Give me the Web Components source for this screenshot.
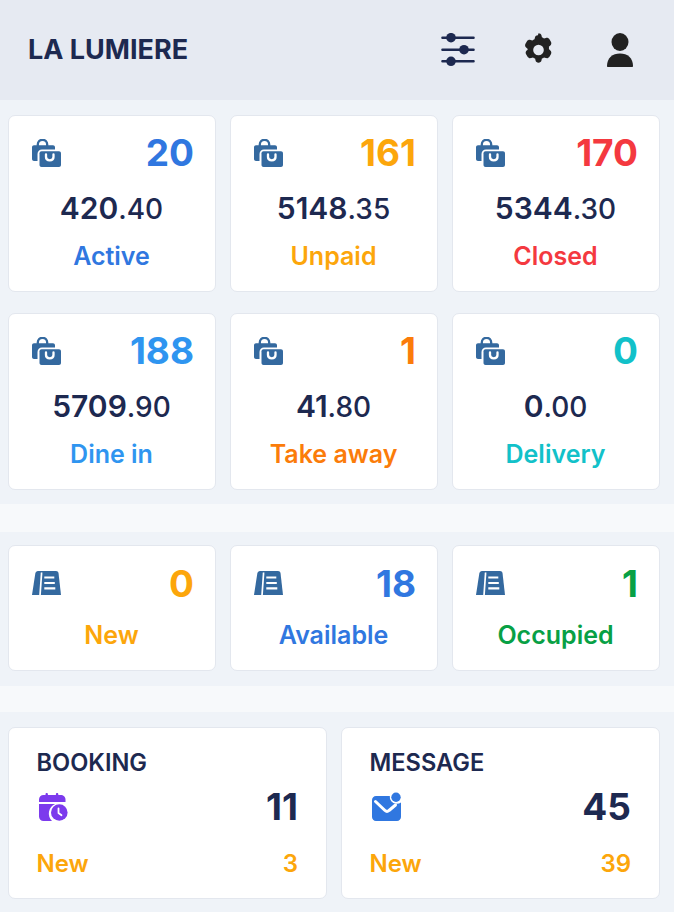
<!DOCTYPE html>
<html>
<head>
<meta charset="utf-8">
<title>La Lumiere</title>
<style>
   html, body { margin: 0; padding: 0; }
   body {
      width: 674px;
      height: 912px;
      overflow: hidden;
      background: #eff3f8;
      font-family: Inter, "Liberation Sans", sans-serif;
      color: #1d2950;
   }
</style>
</head>
<body>

<template id="dash-header-tpl">
   <style>
      :host {
         display: flex;
         align-items: center;
         height: 100px;
         box-sizing: border-box;
         padding: 0 41px 0 28px;
         background: #e6eaf2;
      }
      h1 {
         flex: 1;
         margin: 0 0 2px;
         font-size: 27px;
         font-weight: 700;
         color: #1d2950;
      }
      nav {
         display: flex;
         align-items: center;
      }
      svg { display: block; }
      .gear { margin-left: 48px; }
      .user { margin-left: 53px; }
   </style>
   <h1><slot></slot></h1>
   <nav>
      <svg width="34" height="34" viewBox="0 0 34 34">
         <path stroke="#1d2950" stroke-width="2.600" stroke-linecap="round" d="M1.500 4.700h31M1.500 16.700h31M1.500 28.300h31"/>
         <g fill="#1d2950">
            <circle cx="10" cy="4.700" r="4.800"/>
            <circle cx="23" cy="16.700" r="4.800"/>
            <circle cx="10" cy="28.300" r="4.800"/>
         </g>
      </svg>
      <svg class="gear" width="31" height="34" viewBox="3 0.500 18 23">
         <path fill="#222" fill-rule="evenodd" d="M12 .6c1 0 1.800.6 2 1.500l.3 1.300c.5.2 1 .4 1.400.8l1.300-.4c.9-.3 1.900.1 2.400.9l1 1.700c.5.900.3 1.900-.4 2.500l-1 .9c.1.300.1.500.1.800s0 .500-.1.800l1 .9c.7.600.9 1.600.4 2.500l-1 1.700c-.5.800-1.500 1.200-2.400.9l-1.300-.4c-.4.300-.9.600-1.400.8l-.3 1.300c-.2.900-1 1.500-2 1.500s-1.800-.6-2-1.500l-.3-1.300c-.5-.2-1-.5-1.400-.8l-1.300.4c-.9.3-1.900-.1-2.400-.9l-1-1.700c-.5-.9-.3-1.900.4-2.500l1-.9C4.500 12.500 4.500 12.300 4.500 12s0-.500.100-.8l-1-.9c-.7-.6-.9-1.600-.4-2.500l1-1.700c.5-.8 1.500-1.200 2.400-.9l1.300.4c.4-.4.9-.6 1.400-.8l.3-1.300c.2-.9 1-1.500 2-1.500zM12 8.400a3.600 3.600 0 1 0 0 7.200 3.600 3.600 0 0 0 0-7.200z"/>
      </svg>
      <svg class="user" width="26" height="34" viewBox="0 0 26 34">
         <ellipse cx="13" cy="9" rx="8.500" ry="9" fill="#222"/>
         <path fill="#222" d="M1 34c-.6 0-1-.4-1-1C0 25 5.500 20.500 13 20.500S26 25 26 33c0 .6-.4 1-1 1z"/>
      </svg>
   </nav>
</template>

<template id="card-grid-tpl">
   <style>
      :host {
         display: grid;
         grid-template-columns: repeat(var(--cols, 3), 1fr);
         column-gap: 14px;
         row-gap: 21px;
         padding: var(--top, 15px) 14px var(--bottom, 14px) 8px;
      }
   </style>
   <slot></slot>
</template>

<template id="gap-band-tpl">
   <style>
      :host { display: block; height: var(--h, 28px); background: #f7f9fb; }
   </style>
</template>

<template id="order-card-tpl">
   <style>
      :host {
         display: block;
         height: 177px;
         box-sizing: border-box;
         padding: 19px 21px 0 23px;
         background: #fff;
         border: 1.500px solid #e3e7ee;
         border-radius: 7px;
         color: var(--c);
      }
      .top {
         display: flex;
         justify-content: space-between;
         align-items: center;
         height: 36px;
      }
      .count { font-size: 37px; font-weight: 700; line-height: 36px; }
      svg { display: block; }
      .amount {
         margin: 18px -8px 0 -11px;
         text-align: center;
         font-size: 30px;
         line-height: 38px;
         font-weight: 600;
         color: #1d2950;
      }
      .amount small { font-size: 28px; font-weight: 500; }
      .label {
         margin: 12px -8px 0 -11px;
         text-align: center;
         font-size: 25px;
         line-height: 32px;
         font-weight: 600;
      }
   </style>
   <div class="top">
      <svg width="29" height="28" viewBox="0 0 29 28">
         <path fill="none" stroke="#34699f" stroke-width="2.300" d="M5.800 7V5.500a4.700 4.700 0 0 1 9.400 0V7"/>
         <path fill="#34699f" d="M2 6.300h19c1.100 0 2 .9 2 2v2.200H10C7.500 10.500 5.500 12.500 5.500 15v7H2c-1.100 0-2-.9-2-2V8.300c0-1.100.9-2 2-2z"/>
         <path fill="#34699f" d="M9.500 12.300H27c1.100 0 2 .9 2 2V26c0 1.100-.9 2-2 2H9.500c-1.100 0-2-.9-2-2V14.300c0-1.100.9-2 2-2z"/>
         <path fill="none" stroke="#fff" stroke-width="2.300" stroke-linecap="round" d="M14 15.500v2.500c0 2 1.700 3.300 3.800 3.300s3.700-1.300 3.700-3.300v-2.500"/>
      </svg>
      <span class="count"></span>
   </div>
   <div class="amount"><span class="whole"></span><small class="cents"></small></div>
   <div class="label"><slot></slot></div>
</template>

<template id="table-card-tpl">
   <style>
      :host {
         display: block;
         height: 126px;
         box-sizing: border-box;
         padding: 20px 21px 0 23px;
         background: #fff;
         border: 1.500px solid #e3e7ee;
         border-radius: 7px;
         color: var(--c);
      }
      .top {
         display: flex;
         justify-content: space-between;
         align-items: center;
         height: 36px;
      }
      .count { font-size: 37px; font-weight: 700; line-height: 36px; }
      svg { display: block; margin-top: -2px; }
      .label {
         margin: 17px -8px 0 -11px;
         text-align: center;
         font-size: 25px;
         line-height: 32px;
         font-weight: 600;
      }
   </style>
   <div class="top">
      <svg width="29" height="24" viewBox="0 0 29 24">
         <path fill="#34699f" d="M6 0H24c1.300 0 2.300.8 2.500 2L29 24H0L3.300 2.500C3.600 1 4.600 0 6 0z"/>
         <path fill="none" stroke="#fff" stroke-width="1.700" d="M9.400 1.500C9.700 2.500 9.500 3.500 9.400 4.500L8 24.500"/>
         <path fill="none" stroke="#fff" stroke-width="2.200" d="M12.300 6.500h10M12.300 12h10.500M12.300 17.300h11"/>
      </svg>
      <span class="count"></span>
   </div>
   <div class="label"><slot></slot></div>
</template>

<template id="info-card-tpl">
   <style>
      :host {
         display: block;
         height: 172px;
         box-sizing: border-box;
         padding: 19px 28px 0 27.500px;
         background: #fff;
         border: 1.500px solid #e3e7ee;
         border-radius: 7px;
         color: #1d2950;
      }
      h2 {
         margin: 0;
         font-size: 23.600px;
         line-height: 32px;
         font-weight: 600;
      }
      .mid {
         display: flex;
         justify-content: space-between;
         align-items: center;
         height: 44px;
         margin-top: 5px;
      }
      .mid span { font-size: 37px; font-weight: 700; }
      .new {
         display: flex;
         justify-content: space-between;
         margin-top: 20px;
         font-size: 24px;
         line-height: 32px;
         font-weight: 600;
         color: #fca60b;
      }
      ::slotted(svg) { display: block; margin: 1px 0 0 2px; }
   </style>
   <h2 class="title"></h2>
   <div class="mid"><slot></slot><span class="total"></span></div>
   <div class="new"><span>New</span><span class="fresh"></span></div>
</template>

<dash-header>LA LUMIERE</dash-header>

<card-grid>
   <order-card color="#3077e0" count="20" whole="420" cents=".40">Active</order-card>
   <order-card color="#fca60b" count="161" whole="5148" cents=".35">Unpaid</order-card>
   <order-card color="#f4393f" count="170" whole="5344" cents=".30">Closed</order-card>
   <order-card color="#2f95f0" count="188" whole="5709" cents=".90">Dine in</order-card>
   <order-card color="#fb7c0a" count="1" whole="41" cents=".80">Take away</order-card>
   <order-card color="#12c1c9" count="0" whole="0" cents=".00">Delivery</order-card>
</card-grid>
<gap-band></gap-band>
<card-grid style="--top:13px;--bottom:15px">
   <table-card color="#fca60b" count="0">New</table-card>
   <table-card color="#3077e0" count="18">Available</table-card>
   <table-card color="#08a045" count="1">Occupied</table-card>
</card-grid>
<gap-band style="--h:26px"></gap-band>
<card-grid style="--cols:2">
   <info-card title-text="BOOKING" total="11" fresh="3">
      <svg width="29" height="28" viewBox="0 0 29 28">
         <path fill="#7c3aed" d="M7.700 0c.7 0 1.200.5 1.200 1.200V2h8V1.200c0-.7.5-1.200 1.200-1.200s1.200.5 1.200 1.200V2h2.200C24.500 2 26.500 4 26.500 6.500V9H0V6.500C0 4 2 2 4.500 2h2V1.200C6.500.5 7 0 7.700 0z"/>
         <path fill="#7c3aed" d="M0 11h16.200A10.300 10.300 0 0 0 13 28H4.500C2 28 0 26 0 23.500z"/>
         <circle cx="20.300" cy="19.500" r="8.300" fill="#7c3aed"/>
         <path fill="none" stroke="#fff" stroke-width="1.800" stroke-linecap="round" stroke-linejoin="round" d="M19.500 15.500v4.500l3 2.300"/>
      </svg>
   </info-card>
   <info-card title-text="MESSAGE" total="45" fresh="39">
      <svg width="30" height="30" viewBox="0 0 30 30">
         <path fill="#3077e0" d="M4 4h13.800A7 7 0 0 0 24 11.800 7 7 0 0 0 29 10.500V25c0 2.200-1.800 4-4 4H4c-2.200 0-4-1.800-4-4V8c0-2.200 1.800-4 4-4z"/>
         <path fill="none" stroke="#fff" stroke-width="3" stroke-linecap="round" stroke-linejoin="round" d="M3.500 9.500 13 18.500c1.200 1.100 2.800 1.100 4 0l6.500-5.500"/>
         <circle cx="24" cy="5.300" r="4.700" fill="#3077e0"/>
      </svg>
   </info-card>
</card-grid>

<script>
class ShadowBase extends HTMLElement {
   constructor(tpl_id) {
      super();
      this.attachShadow({ mode: "open" });
      this.shadowRoot.append(document.getElementById(tpl_id).content.cloneNode(true));
   }
   _fill(selector, attr) {
      this.shadowRoot.querySelector(selector).textContent = this.getAttribute(attr);
   }
}
class DashHeader extends ShadowBase {
   constructor() { super("dash-header-tpl"); }
}
class CardGrid extends ShadowBase {
   constructor() { super("card-grid-tpl"); }
}
class GapBand extends ShadowBase {
   constructor() { super("gap-band-tpl"); }
}
class OrderCard extends ShadowBase {
   constructor() { super("order-card-tpl"); }
   connectedCallback() {
      this.style.setProperty("--c", this.getAttribute("color"));
      this._fill(".count", "count");
      this._fill(".whole", "whole");
      this._fill(".cents", "cents");
   }
}
class TableCard extends ShadowBase {
   constructor() { super("table-card-tpl"); }
   connectedCallback() {
      this.style.setProperty("--c", this.getAttribute("color"));
      this._fill(".count", "count");
   }
}
class InfoCard extends ShadowBase {
   constructor() { super("info-card-tpl"); }
   connectedCallback() {
      this._fill(".title", "title-text");
      this._fill(".total", "total");
      this._fill(".fresh", "fresh");
   }
}
customElements.define("dash-header", DashHeader);
customElements.define("card-grid", CardGrid);
customElements.define("gap-band", GapBand);
customElements.define("order-card", OrderCard);
customElements.define("table-card", TableCard);
customElements.define("info-card", InfoCard);
</script>
</body>
</html>
